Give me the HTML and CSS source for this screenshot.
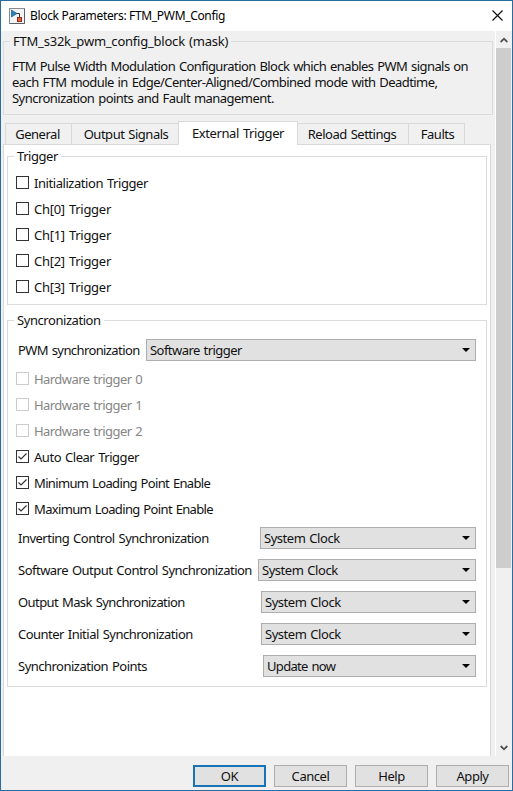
FILE: index.html
```html
<!DOCTYPE html>
<html lang="en">
<head>
<meta charset="utf-8">
<title>Block Parameters: FTM_PWM_Config</title>
<link rel="stylesheet" href="styles.css">
</head>
<body>
<div class="window">
  <header class="titlebar">
    <svg class="app-icon" width="16" height="16" viewBox="0 0 16 16">
      <rect x=".5" y=".5" width="15" height="15" fill="#f3f3f3" stroke="#858b91"/>
      <path d="M1 15.5H15.5V1" fill="none" stroke="#595f66"/>
      <path d="M7 5.500H10.500V10" fill="none" stroke="#333"/>
      <path d="M2.500 2L8 5.500L2.500 9Z" fill="#2784bc" stroke="#1c5c89" stroke-width=".7"/>
      <rect x="8.500" y="9.500" width="4" height="4" fill="#e36140" stroke="#8d2e1d"/>
    </svg>
    <h1 class="title">Block Parameters: FTM_PWM_Config</h1>
    <svg class="close" width="11" height="11" viewBox="0 0 11 11"><path d="M.5 .5L10.500 10.500M10.500 .5L.5 10.500" fill="none" stroke="#111" stroke-width="1.200"/></svg>
  </header>
  <div class="body">
    <main class="content">
      <fieldset class="group mask">
        <legend class="mask-name">FTM_s32k_pwm_config_block (mask)</legend>
        <div class="desc">
          <div class="d1">FTM Pulse Width Modulation Configuration Block which enables PWM signals on</div>
          <div class="d2">each FTM module in Edge/Center-Aligned/Combined mode with Deadtime,</div>
          <div class="d3">Syncronization points and Fault management.</div>
        </div>
      </fieldset>
      <nav class="tabs">
        <span class="tab general">General</span>
        <span class="tab output">Output Signals</span>
        <span class="tab external active">External Trigger</span>
        <span class="tab reload">Reload Settings</span>
        <span class="tab faults">Faults</span>
      </nav>
      <div class="panel">
        <fieldset class="group trigger">
          <legend>Trigger</legend>
          <div class="checks">
            <label class="check init"><i class="box"></i><span>Initialization Trigger</span></label>
            <label class="check channel"><i class="box"></i><span>Ch[0] Trigger</span></label>
            <label class="check channel"><i class="box"></i><span>Ch[1] Trigger</span></label>
            <label class="check channel"><i class="box"></i><span>Ch[2] Trigger</span></label>
            <label class="check channel"><i class="box"></i><span>Ch[3] Trigger</span></label>
          </div>
        </fieldset>
        <fieldset class="group sync">
          <legend>Syncronization</legend>
          <div class="row pwm"><span>PWM synchronization</span><div class="select w330"><span>Software trigger</span><i class="arrow"></i></div></div>
          <div class="checks">
            <label class="check disabled"><i class="box"></i><span>Hardware trigger 0</span></label>
            <label class="check disabled"><i class="box"></i><span>Hardware trigger 1</span></label>
            <label class="check disabled"><i class="box"></i><span>Hardware trigger 2</span></label>
            <label class="check auto"><i class="box"><svg width="11" height="11" viewBox="0 0 11 11"><path d="M1.500 5.500L4 8L9.500 2.500"/></svg></i><span>Auto Clear Trigger</span></label>
            <label class="check loading"><i class="box"><svg width="11" height="11" viewBox="0 0 11 11"><path d="M1.500 5.500L4 8L9.500 2.500"/></svg></i><span>Minimum Loading Point Enable</span></label>
            <label class="check loading"><i class="box"><svg width="11" height="11" viewBox="0 0 11 11"><path d="M1.500 5.500L4 8L9.500 2.500"/></svg></i><span>Maximum Loading Point Enable</span></label>
          </div>
          <div class="rows">
            <div class="row"><span>Inverting Control Synchronization</span><div class="select clock w216"><span>System Clock</span><i class="arrow"></i></div></div>
            <div class="row"><span>Software Output Control Synchronization</span><div class="select clock w218"><span>System Clock</span><i class="arrow"></i></div></div>
            <div class="row"><span class="output-mask">Output Mask Synchronization</span><div class="select clock w215"><span>System Clock</span><i class="arrow"></i></div></div>
            <div class="row"><span>Counter Initial Synchronization</span><div class="select clock w215"><span>System Clock</span><i class="arrow"></i></div></div>
            <div class="row"><span>Synchronization Points</span><div class="select update w213"><span>Update now</span><i class="arrow"></i></div></div>
          </div>
        </fieldset>
      </div>
    </main>
    <aside class="scrollbar">
      <svg class="up" width="8" height="6" viewBox="0 0 8 6"><path d="M.7 5L4 1.700L7.300 5"/></svg>
      <div class="thumb"></div>
      <svg class="down" width="8" height="6" viewBox="0 0 8 6"><path d="M.7 1L4 4.300L7.300 1"/></svg>
    </aside>
  </div>
  <footer class="footer">
    <button class="btn ok">OK</button>
    <button class="btn">Cancel</button>
    <button class="btn">Help</button>
    <button class="btn">Apply</button>
  </footer>
</div>
</body>
</html>
```
FILE: styles.css
```css
* { box-sizing: border-box; }
body { margin: 0; }
.window {
  width: 513px;
  height: 791px;
  border: 1px solid #2b6c9f;
  background: #f0f0f0;
  display: flex;
  flex-direction: column;
  font: 13px/16px "Noto Sans", sans-serif;
  letter-spacing: -.44px;
  word-spacing: 1px;
  color: #111;
  white-space: nowrap;
  overflow: hidden;
}
.titlebar {
  height: 30px;
  flex: none;
  background: #fff;
  display: flex;
  align-items: center;
  padding: 0 9px 0 8px;
}
.title {
  margin: 0 auto 0 5px;
  font-size: 12px;
  line-height: 16px;
  font-weight: 400;
  letter-spacing: -.33px;
  word-spacing: 0;
  color: #000;
}
.close { margin-bottom: 2px; }
.body { display: flex; height: 725px; flex: none; }
.content { width: 494px; padding-left: 2px; display: flex; flex-direction: column; }
.group { margin: 0; padding: 0; border: 1px solid #d9dcdf; min-width: 0; }
legend { margin-left: 6px; padding: 0 3px; height: 18px; line-height: 18px; }
.mask { width: 490px; height: 83px; flex: none; margin-top: 1px; }
.mask-name { letter-spacing: -.22px; }
.desc { margin: 8px 0 0 8px; }
.d1 { letter-spacing: -.58px; }
.d2 { letter-spacing: -.56px; }
.d3 { letter-spacing: -.53px; }
.tabs { height: 23px; flex: none; margin: 7px 0 -1px 2px; display: flex; align-items: flex-end; z-index: 1; }
.tab {
  height: 22px;
  border: 1px solid #d9d9d9;
  border-right: 0;
  display: flex;
  align-items: center;
  justify-content: center;
  letter-spacing: -.48px;
}
.general { width: 66px; padding-right: 2px; }
.output { width: 107px; padding-left: 2px; }
.external { width: 120px; height: 24px; background: #fff; border-right: 1px solid #d9d9d9; border-bottom: 0; padding-bottom: 2px; letter-spacing: -.4px; }
.reload { width: 110px; border-left: 0; padding-right: 2px; }
.faults { width: 57px; border-right: 1px solid #d9d9d9; padding-left: 2px; }
.panel { width: 488px; flex: 1; background: #fff; border: 1px solid #d9d9d9; border-bottom: 0; padding: 2px 3px 0; }
.trigger { width: 480px; height: 158px; }
.sync { width: 480px; height: 376px; margin-top: 6px; }
.checks { display: flex; flex-direction: column; margin-left: 8px; }
.trigger .checks { margin-top: 5px; }
.check { height: 26px; display: flex; align-items: center; gap: 5px; }
.channel { letter-spacing: -.28px; }
.auto { letter-spacing: -.46px; }
.loading { letter-spacing: -.65px; }
.box { width: 13px; height: 13px; border: 1px solid #333; background: #fff; display: block; position: relative; top: -1px; }
.box svg { display: block; fill: none; stroke: #333; stroke-width: 1.2; }
.disabled { color: #858585; letter-spacing: -.56px; }
.disabled .box { border-color: #ccc; }
.row { height: 22px; display: flex; align-items: center; justify-content: space-between; padding: 0 10px; letter-spacing: -.51px; }
.pwm { margin: 10px 0 5px; letter-spacing: -.6px; }
.output-mask { letter-spacing: -.58px; }
.rows { display: flex; flex-direction: column; gap: 10px; margin-top: 5px; }
.select {
  height: 22px;
  flex: none;
  border: 1px solid #adadad;
  background: #e1e1e1;
  display: flex;
  align-items: center;
  justify-content: space-between;
  padding: 0 5px 0 3px;
  letter-spacing: -.55px;
}
.clock { letter-spacing: -.46px; }
.update { letter-spacing: -.68px; }
.w330 { width: 330px; }
.w218 { width: 218px; }
.w216 { width: 216px; }
.w215 { width: 215px; }
.w213 { width: 213px; }
.arrow { border: 4px solid transparent; border-top-color: #000; border-bottom: 0; }
.scrollbar { width: 17px; border-left: 1px solid #fff; display: flex; flex-direction: column; align-items: center; background: #f0f0f0; }
.scrollbar svg { flex: none; fill: none; stroke: #505050; stroke-width: 1.8; }
.up { margin: 6px 0 5px; }
.thumb { width: 15px; height: 520px; background: #cdcdcd; flex: none; align-self: flex-start; }
.down { margin-top: auto; margin-bottom: 5px; }
.footer { display: flex; justify-content: flex-end; gap: 8px; padding: 9px 3px 0 0; }
.btn { width: 73px; height: 22px; padding: 0; border: 1px solid #adadad; background: #e1e1e1; font: inherit; letter-spacing: -.45px; color: #111; }
.ok { border: 2px solid #1873b7; }
```
